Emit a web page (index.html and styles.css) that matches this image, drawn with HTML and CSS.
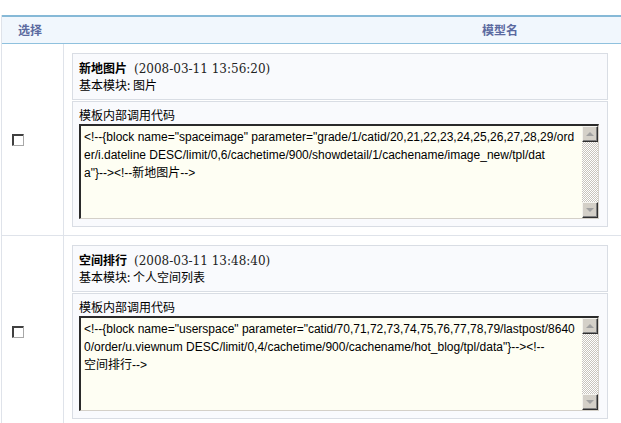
FILE: index.html
```html
<!DOCTYPE html>
<html lang="zh-CN">
<head>
<meta charset="utf-8">
<title>模型列表</title>
<link rel="stylesheet" href="styles.css">
</head>
<body>
<div class="list">
  <div class="head">
    <div class="h-sel">选择</div>
    <div class="h-name">模型名</div>
  </div>

  <div class="row">
    <div class="cell-chk"><input type="checkbox" class="cb"></div>
    <div class="cell-info">
      <div class="box meta">
        <div><b class="title">新地图片</b><span class="date">(2008-03-11 13:56:20)</span></div>
        <div>基本模块: 图片</div>
      </div>
      <div class="box code">
        <div class="label">模板内部调用代码</div>
        <div class="codewrap">
          <textarea class="codearea" readonly>&lt;!--{block name="spaceimage" parameter="grade/1/catid/20,21,22,23,24,25,26,27,28,29/ord
er/i.dateline DESC/limit/0,6/cachetime/900/showdetail/1/cachename/image_new/tpl/dat
a"}--&gt;&lt;!--新地图片--&gt;</textarea>
          <div class="sb"><span class="sb-btn up"></span><span class="sb-track"></span><span class="sb-btn down"></span></div>
        </div>
      </div>
    </div>
  </div>

  <div class="row">
    <div class="cell-chk"><input type="checkbox" class="cb"></div>
    <div class="cell-info">
      <div class="box meta">
        <div><b class="title">空间排行</b><span class="date">(2008-03-11 13:48:40)</span></div>
        <div>基本模块: 个人空间列表</div>
      </div>
      <div class="box code">
        <div class="label">模板内部调用代码</div>
        <div class="codewrap">
          <textarea class="codearea" readonly>&lt;!--{block name="userspace" parameter="catid/70,71,72,73,74,75,76,77,78,79/lastpost/8640
0/order/u.viewnum DESC/limit/0,4/cachetime/900/cachename/hot_blog/tpl/data"}--&gt;&lt;!--
空间排行--&gt;</textarea>
          <div class="sb"><span class="sb-btn up"></span><span class="sb-track"></span><span class="sb-btn down"></span></div>
        </div>
      </div>
    </div>
  </div>
</div>
</body>
</html>
```

FILE: styles.css
```css
html, body {
  margin: 0;
  background: #fff;
}
body {
  padding-top: 15px;
  font-family: "Liberation Sans", "Noto Sans CJK SC", sans-serif;
  font-size: 12px;
  color: #000;
}
.list {
  margin-left: 1px;
  border-left: 1px solid #dfe3ea;
}
.head {
  display: grid;
  grid-template-columns: 62px 1fr;
  align-items: center;
  height: 26px;
  background: #f1f7fd;
  border-top: 2px solid #86b9d7;
  border-bottom: 1px solid #8fc1de;
  font-family: "Noto Sans CJK SC", sans-serif;
  font-weight: bold;
  color: #5b6aa0;
  line-height: 16px;
}
.h-sel { padding-left: 16px; }
.h-name { padding-left: 418px; }

.row {
  display: grid;
  grid-template-columns: 62px 1fr;
  border-bottom: 1px solid #dfe3ea;
}
.cell-chk {
  box-sizing: border-box;
  border-right: 1px solid #dfe3ea;
  display: flex;
  align-items: center;
  padding-left: 10px;
}
.cb {
  appearance: none;
  -webkit-appearance: none;
  box-sizing: border-box;
  width: 12px;
  height: 12px;
  margin: 0;
  background: #fff;
  border: 1px solid;
  border-color: #404040 #a8a8a8 #a8a8a8 #404040;
  box-shadow: inset 1px 1px 0 #404040;
}
.cell-info {
  padding: 9px 13px 8px 8px;
}
.box {
  border: 1px solid #d9dde4;
  background: #f9fafd;
  line-height: 16px;
  font-family: "Noto Sans CJK SC", sans-serif;
}
.meta {
  padding: 6px 6px;
}
.title { font-weight: bold; }
.date {
  margin-left: 7px;
  font-family: "DejaVu Serif", serif;
  color: #222;
}
.code {
  margin-top: 1px;
  padding: 5px 8px 7px 6px;
}
.label { margin-bottom: 1px; }
.codewrap {
  box-sizing: border-box;
  display: flex;
  width: 520px;
  height: 95px;
  border-style: solid;
  border-width: 2px 1px 1px 2px;
  border-color: #2a2a2a #d4d0c8 #d4d0c8 #2a2a2a;
  background: #fefef3;
}
.codearea {
  flex: 1;
  min-width: 0;
  margin: 0;
  border: 0;
  padding: 2px 3px;
  background: transparent;
  resize: none;
  overflow: hidden;
  outline: none;
  font-family: "Liberation Sans", "Noto Sans CJK SC", sans-serif;
  font-size: 12px;
  line-height: 18px;
  color: #000;
  word-break: break-all;
}
.sb {
  display: flex;
  flex-direction: column;
  width: 16px;
}
.sb-track {
  flex: 1;
  background-color: #fff;
  background-image: repeating-conic-gradient(#c8c4bc 0 25%, #ffffff 0 50%);
  background-size: 2px 2px;
}
.sb-btn {
  box-sizing: border-box;
  display: flex;
  align-items: center;
  justify-content: center;
  height: 16px;
  background: #d4d0c8;
  border: 1px solid;
  border-color: #f4f3ee #303030 #303030 #f4f3ee;
  box-shadow: inset -1px -1px 0 #808080;
}
.sb-btn::before {
  content: "";
  width: 0;
  height: 0;
  border-left: 4px solid transparent;
  border-right: 4px solid transparent;
}
.up::before { border-bottom: 4px solid #a0a0a0; }
.down::before { border-top: 4px solid #a0a0a0; }
```
